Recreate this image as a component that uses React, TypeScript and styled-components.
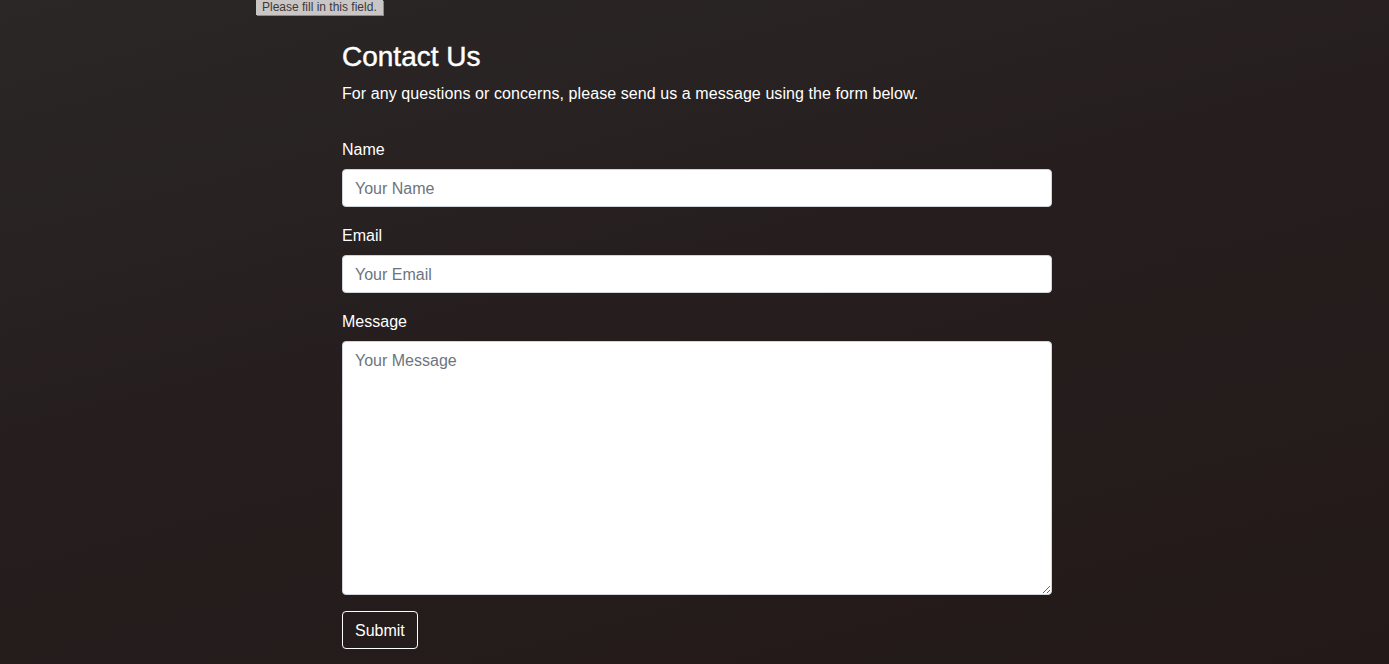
import React from "react";
import styled, { createGlobalStyle } from "styled-components";

const GlobalStyle = createGlobalStyle`
  html, body { margin: 0; padding: 0; }
  body {
    font-family: "Liberation Sans", Arial, sans-serif;
    color: #ffffff;
    background: #251d1d;
  }
  * { box-sizing: border-box; }
`;

const Page = styled.div`
  position: relative;
  min-height: 664px;
  padding: 40px 0 0 342px;
  background: linear-gradient(165deg, #2b2727 0%, #261e1e 45%, #231919 100%);
`;

const Tooltip = styled.div`
  position: absolute;
  top: 0;
  left: 256px;
  height: 15px;
  padding: 0 6px;
  background: #cac6c6;
  color: #3b3939;
  font-size: 12px;
  line-height: 14px;
  box-shadow: 1px 1px 0 #8f8b8b;
`;

const Wrapper = styled.div`
  width: 710px;
`;

const Title = styled.h3`
  margin: 0 0 8px;
  font-size: 28px;
  font-weight: 500;
  line-height: 1.2;
  -webkit-text-stroke: 0.45px #ffffff;
`;

const Intro = styled.p`
  margin: 0 0 31px;
  font-size: 16px;
  line-height: 24px;
  letter-spacing: 0.08px;
`;

const Form = styled.form`
  display: flex;
  flex-direction: column;
  gap: 16px;
`;

const Field = styled.div`
  display: flex;
  flex-direction: column;
`;

const Label = styled.label`
  padding-top: 1px;
  margin-bottom: 7px;
  font-size: 16px;
  line-height: 24px;
`;

const inputStyles = `
  width: 100%;
  padding: 7px 12px 5px;
  font-family: "Liberation Sans", Arial, sans-serif;
  font-size: 16px;
  line-height: 24px;
  color: #212529;
  background: #ffffff;
  border: 1px solid #ced4da;
  border-radius: 4px;
  outline: none;
  &::placeholder { color: #6c757d; }
`;

const Input = styled.input`
  ${inputStyles}
  height: 38px;
`;

const TextArea = styled.textarea`
  ${inputStyles}
  height: 254px;
  resize: vertical;
`;

const Actions = styled.div`
  display: flex;
`;

const SubmitButton = styled.button`
  height: 38px;
  padding: 7px 12px 5px;
  font-family: "Liberation Sans", Arial, sans-serif;
  font-size: 16px;
  line-height: 24px;
  color: #ffffff;
  background: transparent;
  border: 1px solid #ffffff;
  border-radius: 4px;
  cursor: pointer;
`;

export default function App() {
  return (
    <>
      <GlobalStyle />
      <Page>
        <Tooltip>Please fill in this field.</Tooltip>
        <Wrapper>
          <Title>Contact Us</Title>
          <Intro>For any questions or concerns, please send us a message using the form below.</Intro>
          <Form onSubmit={(e) => e.preventDefault()}>
            <Field>
              <Label htmlFor="name">Name</Label>
              <Input id="name" type="text" placeholder="Your Name" />
            </Field>
            <Field>
              <Label htmlFor="email">Email</Label>
              <Input id="email" type="email" placeholder="Your Email" />
            </Field>
            <Field>
              <Label htmlFor="message">Message</Label>
              <TextArea id="message" placeholder="Your Message" />
            </Field>
            <Actions>
              <SubmitButton type="submit">Submit</SubmitButton>
            </Actions>
          </Form>
        </Wrapper>
      </Page>
    </>
  );
}
